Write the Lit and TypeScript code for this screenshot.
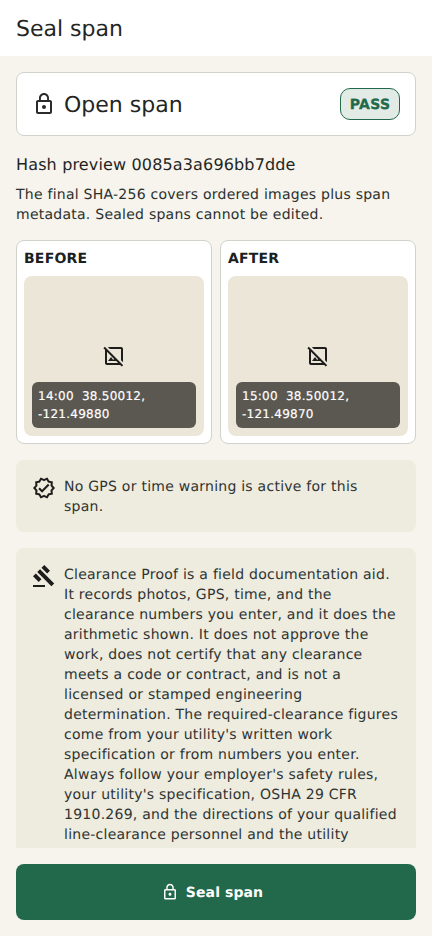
import { LitElement, html, css, svg } from "lit";
import { customElement } from "lit/decorators.js";

const LOCK = svg`<path d="M12 17c1.1 0 2-.9 2-2s-.9-2-2-2-2 .9-2 2 .9 2 2 2zm6-9h-1V6c0-2.76-2.24-5-5-5S7 3.24 7 6v2H6c-1.1 0-2 .9-2 2v10c0 1.1.9 2 2 2h12c1.1 0 2-.9 2-2V10c0-1.1-.9-2-2-2zM8.9 6c0-1.71 1.39-3.1 3.1-3.1s3.1 1.39 3.1 3.1v2H8.9V6zM18 20H6V10h12v10z"/>`;
const HIDE = svg`<path d="M21.19 21.19 2.81 2.81 1.39 4.22 3 5.83V19c0 1.1.9 2 2 2h13.17l1.61 1.61 1.41-1.42zM5 19V7.83l7.07 7.07-.82 1.1L9 13l-3 4h8.17l2 2H5zM7.83 5l-2-2H19c1.1 0 2 .9 2 2v13.17l-2-2V5H7.83z"/>`;
const VERIFIED = svg`<path d="M23 11.99l-2.44-2.79.34-3.69-3.61-.82L15.4 1.5 12 2.96 8.6 1.5 6.71 4.69 3.1 5.5l.34 3.7L1 11.99l2.44 2.79-.34 3.7 3.61.82 1.89 3.2L12 21.04l3.4 1.46 1.89-3.19 3.61-.82-.34-3.69L23 11.99zm-3.95 1.48l-.56.65.08.85.18 1.95-1.9.43-.84.19-.44.74-.99 1.68-1.78-.77-.8-.34-.79.34-1.78.77-.99-1.67-.44-.74-.84-.19-1.9-.43.18-1.96.08-.85-.56-.65L3.67 12l1.29-1.48.56-.65-.09-.86-.18-1.94 1.9-.43.84-.19.44-.74.99-1.68 1.78.77.8.34.79-.34 1.78-.77.99 1.68.44.74.84.19 1.9.43-.18 1.95-.08.85.56.65 1.29 1.47-1.28 1.48z"/><path d="M10.09 13.75l-2.32-2.33-1.48 1.49 3.8 3.81 7.34-7.36-1.48-1.49z"/>`;
const GAVEL = svg`<path d="M1 21h12v2H1v-2zM5.24 8.07l2.83-2.83 14.14 14.14-2.83 2.83L5.24 8.07zM12.32 1l5.66 5.66-2.83 2.83-5.66-5.66L12.32 1zM3.83 9.48l5.66 5.66-2.83 2.83L1 12.31l2.83-2.83z"/>`;

const icon = (p: unknown, cls = "") =>
  html`<svg class="icon ${cls}" viewBox="0 0 24 24" fill="currentColor">${p}</svg>`;

@customElement("app-root")
export class AppRoot extends LitElement {
  static styles = css`
    :host {
      display: flex;
      flex-direction: column;
      height: 936px;
      width: 432px;
      overflow: hidden;
      background: #f6f4ec;
      color: #1f2624;
      font-family: "DejaVu Sans", sans-serif;
      text-rendering: geometricPrecision;
    }
    .icon { width: 24px; height: 24px; flex: none; display: block; }
    header {
      height: 56px;
      box-sizing: border-box;
      flex: none;
      background: #fff;
      display: flex;
      align-items: center;
      padding: 3px 16px 0;
      font-size: 22px;
    }
    main {
      flex: 1;
      min-height: 0;
      overflow: hidden;
      padding: 16px;
      display: flex;
      flex-direction: column;
    }
    .status {
      flex: none;
      height: 64px;
      box-sizing: border-box;
      background: #fff;
      border: 1px solid #d2d2cd;
      border-radius: 8px;
      display: flex;
      align-items: center;
      padding: 0 15px;
      gap: 8px;
    }
    .status .icon { color: #2b2b2b; }
    .status-title { flex: 1; font-size: 22px; padding-top: 2px; }
    .chip {
      width: 60px;
      height: 32px;
      box-sizing: border-box;
      display: flex;
      align-items: center;
      justify-content: center;
      padding-top: 1px;
      background: #e3ebe6;
      border: 1px solid #22694b;
      border-radius: 10px;
      color: #22694b;
      font-size: 14px;
      font-weight: 800;
      letter-spacing: 0.3px;
      -webkit-text-stroke: 0.3px #22694b;
    }
    .hash { margin-top: 18px; font-size: 16px; line-height: 22px; letter-spacing: 0.15px; }
    .desc { margin-top: 9px; font-size: 14px; line-height: 20px; letter-spacing: 0.25px; color: #2b302e; }
    .pair { flex: none; display: grid; grid-template-columns: 1fr 1fr; gap: 8px; margin-top: 15px; }
    .shot {
      height: 204px;
      box-sizing: border-box;
      background: #fff;
      border: 1px solid #d2d2cd;
      border-radius: 8px;
      padding: 7px;
      display: flex;
      flex-direction: column;
    }
    .shot-label { height: 20px; box-sizing: border-box; padding-top: 1px; line-height: 20px; font-size: 14px; font-weight: 700; letter-spacing: 0.2px; color: #1a211f; margin-bottom: 8px; }
    .frame {
      flex: 1;
      background: #ebe6d8;
      border-radius: 8px;
      padding: 8px;
      display: flex;
      flex-direction: column;
      align-items: center;
      justify-content: flex-end;
    }
    .frame .icon { margin-bottom: 14px; color: #1d1d1b; }
    .cap {
      align-self: stretch;
      height: 46px;
      box-sizing: border-box;
      background: #5b5751;
      border-radius: 6px;
      padding: 5px 6px;
      color: #fff;
      font-size: 12px;
      line-height: 18px;
      letter-spacing: 0.25px;
      -webkit-text-stroke: 0.2px #fff;
      white-space: pre-wrap;
    }
    .note {
      flex: none;
      background: #eeebdf;
      border-radius: 8px;
      padding: 16px;
      display: flex;
      gap: 8px;
      margin-top: 16px;
      font-size: 14px;
      line-height: 20px;
      letter-spacing: 0.25px;
      color: #2f3432;
    }
    .note .icon { color: #1d1d1b; }
    .note-text { padding-top: 1px; margin-bottom: -1px; }
    footer { flex: none; padding: 16px; }
    button {
      all: unset;
      box-sizing: border-box;
      width: 100%;
      height: 56px;
      padding-right: 8px;
      background: #22694b;
      border-radius: 8px;
      color: #fff;
      display: flex;
      align-items: center;
      justify-content: center;
      gap: 7px;
      font-family: inherit;
      font-size: 14px;
      font-weight: 700;
      letter-spacing: 0.1px;
    }
    button .icon { width: 18px; height: 18px; }
    .btn-label { padding-top: 2px; }
  `;

  private shot(label: string, cap: string) {
    return html`<div class="shot">
      <div class="shot-label">${label}</div>
      <div class="frame">${icon(HIDE)}<div class="cap">${cap}</div></div>
    </div>`;
  }

  render() {
    return html`
      <header>Seal span</header>
      <main>
        <section class="status">
          ${icon(LOCK)}
          <div class="status-title">Open span</div>
          <div class="chip">PASS</div>
        </section>
        <div class="hash">Hash preview 0085a3a696bb7dde</div>
        <div class="desc">The final SHA-256 covers ordered images plus span metadata. Sealed spans cannot be edited.</div>
        <div class="pair">
          ${this.shot("BEFORE", "14:00  38.50012, -121.49880")}
          ${this.shot("AFTER", "15:00  38.50012, -121.49870")}
        </div>
        <div class="note">${icon(VERIFIED)}<div class="note-text">No GPS or time warning is active for this span.</div></div>
        <div class="note">${icon(GAVEL)}<div class="note-text">Clearance Proof is a field documentation aid. It records photos, GPS, time, and the clearance numbers you enter, and it does the arithmetic shown. It does not approve the work, does not certify that any clearance meets a code or contract, and is not a licensed or stamped engineering determination. The required-clearance figures come from your utility's written work specification or from numbers you enter. Always follow your employer's safety rules, your utility's specification, OSHA 29 CFR 1910.269, and the directions of your qualified line-clearance personnel and the utility</div></div>
      </main>
      <footer><button>${icon(LOCK)}<span class="btn-label">Seal span</span></button></footer>
    `;
  }
}
